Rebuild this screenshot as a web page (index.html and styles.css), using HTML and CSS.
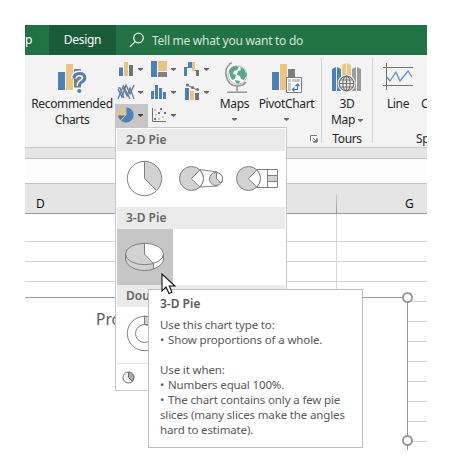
FILE: index.html
```html
<!DOCTYPE html>
<html lang="en">
<head>
<meta charset="utf-8">
<title>Chart design</title>
<link rel="stylesheet" href="styles.css">
</head>
<body>
<main class="window">
  <header class="tabs">
    <span class="tab tab-cut">p</span>
    <span class="tab tab-active">Design</span>
    <span class="tell">
      <svg width="16" height="16" viewBox="0 0 16 16" fill="none" stroke="#e4eee8" stroke-width="1.3"><circle cx="9.5" cy="6" r="4.8"/><path d="M6.2 9.6 1 14.8"/></svg>
      <span class="tell-text">Tell me what you want to do</span>
    </span>
  </header>

  <section class="ribbon">
    <div class="group charts">
      <div class="big recommended">
        <svg width="32" height="34" viewBox="58 62 32 34"><path fill="#4a81ba" d="M60 72h7v18h-7z"/><path fill="#eec57f" d="M68 64h7v26h-7z"/><path fill="#7d7d7d" d="M76 69h7v21h-7z"/><path d="M76 78.500q0-5 5.500-5t5.300 4.300q0 2.700-3 4.200-2.300 1.200-2.300 4" fill="none" stroke="#f3f3f3" stroke-width="6"/><path d="M76 78.500q0-5 5.500-5t5.300 4.300q0 2.700-3 4.200-2.300 1.200-2.300 4" fill="none" stroke="#4a81ba" stroke-width="3"/><path d="M76 87.500h8v6h-8z" fill="#f3f3f3"/><circle cx="81.300" cy="91" r="2" fill="#4a81ba"/></svg>
        <span class="label">Recommended</span><span class="label">Charts</span>
      </div>
      <div class="smalls">
        <svg class="small" viewBox="0 0 33 23"><path fill="#4a81ba" d="M4 9.500h4V18H4z"/><path fill="#eac383" d="M9 4h4v14H9z"/><path fill="#737373" d="M14 7h4v11h-4z"/><path class="arrow" d="M23 10h5v1l-2.500 2-2.500-2z"/></svg>
        <svg class="small" viewBox="0 0 33 23"><path fill="#4a81ba" d="M3 3h6v16H3z"/><path fill="#eac383" d="M10 3h9v10h-9z"/><path fill="#828282" d="M10 14h9v5h-9z"/><path class="arrow" d="M23 10h5v1l-2.500 2-2.500-2z"/></svg>
        <svg class="small" viewBox="0 0 33 23"><path fill="#4a81ba" d="M3 9h4V4h4v6H6v8H3z"/><path fill="#eac383" d="M11 4h3v9h-3z"/><path fill="#737373" d="M14 12h4v6h-3v-5h-1z"/><path class="arrow" d="M23 10h5v1l-2.500 2-2.500-2z"/></svg>
        <svg class="small" viewBox="0 0 33 23" fill="none" stroke-width="1.300"><path stroke="#737373" d="m3 8 4 8 4-12 4 9 4-9M8 4l7 14"/><path stroke="#4a81ba" d="m3 18 5-12 4 9 3-8 4 11M3 7h2l4 10"/><path class="arrow" stroke="none" d="M23 10h5v1l-2.500 2-2.500-2z"/></svg>
        <svg class="small" viewBox="0 0 33 23"><path fill="#4a81ba" d="M3 10h3v8H3zM7 4h3v14H7zM11 7h3v11h-3zM15 11h3v7h-3z"/><path class="arrow" d="M23 10h5v1l-2.500 2-2.500-2z"/></svg>
        <svg class="small" viewBox="0 0 33 23"><path fill="#4a81ba" d="M4 7h4v12H4z"/><path fill="#eac383" d="M9 10h4v9H9z"/><path fill="#737373" d="M14 12h4v7h-4z"/><path d="m6 4 5 2.500L16.500 9" stroke="#737373" fill="none"/><g fill="#737373"><circle cx="6.500" cy="4" r="1.600"/><circle cx="11.500" cy="6.500" r="1.600"/><circle cx="16.500" cy="8.500" r="1.600"/></g><path class="arrow" d="M23 10h5v1l-2.500 2-2.500-2z"/></svg>
        <svg class="small pressed" viewBox="0 0 33 23"><path fill="#4a81ba" d="M11.500 3.500a7.500 7.500 0 1 1-5.500 13l5.500-5.500z"/><path fill="#eac383" d="M10 3.500V10H3q0-6 7-6.500z"/><path fill="#6e6e6e" d="M3 11.500h7L5.200 16Q3.300 14 3 11.500z"/><path fill="#444" d="M23 10h5v1l-2.500 2-2.500-2z"/></svg>
        <svg class="small" viewBox="0 0 33 23"><path d="M4.500 4v13.500H18" fill="none" stroke="#737373"/><path fill="#4a81ba" d="M12 4h2v2h-2zM10 8h2v2h-2zM16 8h2v2h-2zM6 14h2v2H6z"/><path fill="#eac383" d="M6 5h2v2H6zM7 10h2v2H7zM14 12h2v2h-2zM10 14h2v2h-2z"/><path class="arrow" d="M23 10h5v1l-2.500 2-2.500-2z"/></svg>
      </div>
      <div class="big maps">
        <svg width="32" height="34" viewBox="218 62 32 34"><circle cx="236.500" cy="75" r="9.300" fill="#fff" stroke="#c2c2c2"/><path fill="#5ba58a" d="M228 71q2-5 7-5l3 1-2 3-3 1-1 3 3 1-1 4-3 1-2-4zM239 67l4 2 3 6-3 5-3-1-1-3-3-1 1-4 3-1zM234 80l5 1-1 3-3-1z"/><path d="M229 64q-5 4-4 11 2 11 11 11 6 0 9-4M236 86v5M226 92.200h20M228 64l3-1" stroke="#949494" stroke-width="1.600" fill="none"/></svg>
        <span class="label">Maps</span><svg class="down" viewBox="0 0 5 3"><path d="M0 0h5v1L2.500 3 0 1z" fill="#6b6b6b"/></svg>
      </div>
      <div class="big pivot">
        <svg width="32" height="34" viewBox="271 62 32 34"><path fill="#4a81ba" d="M272 72h7v18h-7z"/><path fill="#eec57f" d="M280 64h7v26h-7z"/><path fill="#7d7d7d" d="M288 69h7v8h-7z"/><path fill="#fff" stroke="#7d7d7d" d="M286.500 77.500h15v15h-15z"/><path fill="#c8c8c8" d="M288 79h3v3h-3zM292 79h8v3h-8zM288 83h3v8h-3z"/><path d="M294.500 87.500l-2 2 2 2M293 89.500h4.500V84M295.500 86l2-2 2 2" fill="none" stroke="#3976b5" stroke-width="1.200"/></svg>
        <span class="label">PivotChart</span><svg class="down" viewBox="0 0 5 3"><path d="M0 0h5v1L2.500 3 0 1z" fill="#6b6b6b"/></svg>
      </div>
      <svg class="launcher" viewBox="0 0 8 8" fill="none" stroke="#777"><path d="M.500 6V.500H7M3 3l3 3M7 3v4H3"/><path d="M7 4v3H4z" fill="#777"/></svg>
    </div>
    <div class="group tours">
      <div class="big">
        <svg width="32" height="34" viewBox="331 62 32 34"><path fill="#4a81ba" d="m332 69 4-2v24h-4zM337 67l4 2v22h-4z"/><path fill="#eec57f" d="m342 65 4-2v15h-4zM347 63l4 2v13h-4z"/><path fill="#9b9b9b" d="m352 69 4-2v24h-4zM357 67l4 2v22h-4z"/><circle cx="346.500" cy="83.500" r="9" fill="#f3f3f3"/><g fill="none" stroke="#737373" stroke-width="1.200"><circle cx="346.500" cy="83.500" r="7.300"/><ellipse cx="346.500" cy="83.500" rx="3.700" ry="7.300"/><path d="M339 83.500h15M346.500 76v15M340.500 80h12M340.500 87h12"/></g></svg>
        <span class="label">3D</span><span class="label">Map <svg class="inline-arrow" viewBox="0 0 5 3"><path d="M0 0h5v1L2.500 3 0 1z" fill="#6b6b6b"/></svg></span>
      </div>
      <span class="label group-name">Tours</span>
    </div>
    <div class="group spark">
      <div class="big">
        <svg width="32" height="34" viewBox="382 62 32 34" fill="none"><path d="M386.500 63v27M383 67.500h30M383 85.500h30" stroke="#737373"/><path d="m387 77 3 4 6-9 4 9 8-10 4 6" stroke="#5b91c8" stroke-width="1.300"/></svg>
        <span class="label">Line</span>
      </div>
      <span class="label column">Column</span>
      <span class="label sp">Sparklines</span>
    </div>
  </section>

  <div class="gap"></div>
  <div class="formula"></div>
  <div class="columns"><span class="col-d">D</span><i class="tick"></i><span class="col-g">G</span></div>
  <section class="sheet">
    <div class="chart">
      <h1 class="chart-title">Product</h1>
      <i class="handle top"></i><i class="handle bottom"></i>
    </div>
  </section>

  <section class="menu">
    <h2 class="menu-head">2-D Pie</h2>
    <div class="choices">
      <svg class="choice" viewBox="117 151 56 56"><circle cx="144.500" cy="178.500" r="17.200" fill="#fff"/><path d="M144.500 178.500v-17.200a17.200 17.200 0 0 1 12.200 29.300z" fill="#d2d2d2"/><g fill="none" stroke="#7f7f7f"><circle cx="144.500" cy="178.500" r="17.200"/><path d="M144.500 161.300v17.200l12.200 12.200"/></g></svg>
      <svg class="choice" viewBox="173 151 56 56" stroke="#7f7f7f"><path d="m199.500 169.500 18 2.500m-18 15 18-1" fill="none"/><circle cx="191.500" cy="178.500" r="12" fill="#d2d2d2"/><path d="m199.800 170-8.500 8.700 8.500 8.300q3.700-4 3.700-8.500t-3.700-8.500z" fill="#fff"/><circle cx="216" cy="179" r="6.500" fill="#d2d2d2"/><path d="M216.500 172.500v6l4 4.500q2-2 2-4 0-5.500-6-6.500z" fill="#fff"/></svg>
      <svg class="choice" viewBox="229 151 56 56" stroke="#7f7f7f"><circle cx="248.500" cy="178.500" r="12" fill="#d2d2d2"/><path d="m256.800 170-8.500 8.700 8.500 8.300q3.700-4 3.700-8.500t-3.700-8.500z" fill="#fff"/><path d="M256.500 169.500h21v18h-21M267.500 169.500v18M267.500 181.500h10" fill="none"/><path d="M267.500 175.500h10v6h-10z" fill="#d2d2d2"/></svg>
    </div>
    <h2 class="menu-head">3-D Pie</h2>
    <div class="choices">
      <svg class="choice selected" viewBox="117 229 56 56"><path d="M125.500 254v6c2 7 11 10.500 19 10.500s17-3.500 19-10.500v-6z" fill="#d2d2d2"/><path d="M153.500 263.500v5.300q7-2.500 10-8V254z" fill="#fff"/><ellipse cx="144.500" cy="254" rx="19" ry="10.700" fill="#d2d2d2"/><path d="M144.500 254v-10.700a19 10.700 0 0 1 9 20.200z" fill="#fff"/><g fill="none" stroke="#7f7f7f"><ellipse cx="144.500" cy="254" rx="19" ry="10.700"/><path d="M144.500 243.300V254l9 9.500v5.300M125.500 254v6c2 7 11 10.500 19 10.500s17-3.500 19-10.500v-6"/></g></svg>
    </div>
    <h2 class="menu-head">Doughnut</h2>
    <div class="choices">
      <svg class="choice" viewBox="117 307 56 56" fill="none" stroke="#7f7f7f"><path d="M144.500 316v8.500a9 9 0 0 1 7 14.500l5 6a17 17 0 0 0-12-29z" fill="#d2d2d2"/><circle cx="144.500" cy="333.500" r="17.200"/><circle cx="144.500" cy="333.500" r="9"/></svg>
    </div>
    <div class="more"><svg width="13" height="13" viewBox="0 0 13 13"><path d="M6.500 6.500V1a5.500 5.500 0 0 1 4 9.500z" fill="#ababab"/><g fill="none" stroke="#666"><circle cx="6.500" cy="6.500" r="5.500"/><path d="M6.500 1v5.500l4 4"/></g></svg></div>
  </section>

  <aside class="tip">
    <h3 class="tip-title">3-D Pie</h3>
    <p>Use this chart type to:</p>
    <p><span class="dot">•</span>Show proportions of a whole.</p>
    <p class="blank"></p>
    <p>Use it when:</p>
    <p><span class="dot">•</span>Numbers equal 100%.</p>
    <p><span class="dot">•</span>The chart contains only a few pie</p>
    <p>slices (many slices make the angles</p>
    <p>hard to estimate).</p>
  </aside>
  <svg class="pointer" viewBox="0 0 15 22"><path d="M1 1v17l4-4 3 6.500 3-1.300L8.300 13H14z" fill="#fff" stroke="#111" stroke-width="1.100"/></svg>
</main>
</body>
</html>
```
FILE: styles.css
```css
* { box-sizing: border-box; }
body { margin: 0; background: #fff; font: 12px "Noto Sans", "Open Sans", sans-serif; color: #262626; }
h1, h2, h3, p { margin: 0; }
svg { display: block; flex: none; }
.window { position: relative; width: 402px; height: 425px; margin: 25px 0 0 25px; overflow: hidden; }
.tabs { display: flex; height: 30px; background: #217346; color: #fff; line-height: 29px; letter-spacing: -0.27px; white-space: nowrap; }
.tab-cut { width: 24px; }
.tab-active { width: 67px; background: #1b5c38; text-align: center; }
.tell { display: flex; align-items: center; gap: 7px; padding-left: 13px; color: #d5e5db; }

.ribbon { display: flex; height: 93px; padding: 3px 0 4px; background: #f3f3f3; border-bottom: 1px solid #c9c9c9; overflow: hidden; }
.group { position: relative; display: flex; flex: none; white-space: nowrap; }
.label { line-height: 16px; letter-spacing: -0.35px; }
.big { display: flex; flex-direction: column; align-items: center; padding-top: 4px; }
.charts { width: 297px; border-right: 1px solid #d2d2d2; }
.recommended { width: 90px; padding-left: 4px; }
.smalls { display: grid; grid-template-columns: repeat(3, 33px); grid-auto-rows: 23px; }
.small { width: 33px; height: 23px; }
.pressed { background: #c6c6c6; }
.arrow { fill: #666; }
.down { width: 5px; height: 3px; margin-top: 6px; }
.maps { width: 41px; }
.pivot { width: 63px; }
.launcher { position: absolute; right: 3px; bottom: 0; width: 8px; height: 8px; }
.tours { width: 51px; flex-direction: column; align-items: center; border-right: 1px solid #d2d2d2; }
.tours .big .label:last-child { display: flex; align-items: center; }
.inline-arrow { width: 5px; height: 3px; margin-left: 3px; }
.group-name { margin-top: 3px; }
.spark { width: 54px; }
.spark .big { width: 50px; }
.column { position: absolute; left: 48px; top: 38px; }
.sp { position: absolute; left: 43px; top: 73px; }

.gap { height: 11px; background: #e5e5e5; border-bottom: 1px solid #c3c3c3; }
.formula { height: 25px; background: #fdfdfd; border-bottom: 1px solid #c3c3c3; }
.columns { display: flex; height: 30px; background: #e5e5e5; border-bottom: 1px solid #999; color: #111; line-height: 39px; }
.col-d { width: 311px; padding-left: 11px; }
.tick { width: 1px; height: 19px; margin-top: 10px; background: linear-gradient(#cfcfcf, #999); }
.col-g { padding-left: 68px; }
.sheet { position: relative; height: 236px; background: linear-gradient(#d4d4d4, #d4d4d4) 311px 0 / 1px 100% no-repeat, repeating-linear-gradient(transparent 0 19px, #d4d4d4 19px 20px) 0 8px no-repeat, #fff; }
.chart { position: absolute; left: -1px; top: 83px; width: 384px; height: 170px; background: #fff; border: 1px solid #999; }
.chart-title { padding: 10px 0 0 71px; font-size: 15.5px; font-weight: 400; line-height: 22px; color: #595959; }
.handle { position: absolute; right: -6px; width: 11px; height: 11px; border: 2px solid #999; border-radius: 50%; background: #fff; }
.handle.top { top: -6px; }
.handle.bottom { top: 137px; }

.menu { position: absolute; left: 90px; top: 102px; width: 172px; height: 264px; padding: 1px; background: #fff; border: 1px solid #c6c6c6; }
.menu-head { height: 22px; padding-left: 9px; background: #eaeaea; color: #666; font-size: 12px; line-height: 22px; font-weight: 600; }
.choices { display: flex; height: 56px; }
.choice { width: 56px; height: 56px; }
.selected { background: #c6c6c6; }
.more { height: 27px; padding: 7px 0 0 5px; border-top: 1px solid #e1e1e1; }
.tip { position: absolute; left: 123px; top: 264px; width: 215px; height: 159px; padding: 6px 11px; background: #fff; border: 1px solid #bebebe; color: #595959; font-size: 11.5px; line-height: 15px; letter-spacing: -0.14px; white-space: nowrap; }
.tip-title { margin-bottom: 6px; font-size: 12px; font-weight: 600; line-height: 15px; letter-spacing: 0; }
.dot { display: inline-block; width: 8px; }
.blank { height: 15px; }
.pointer { position: absolute; left: 136px; top: 248px; width: 15px; height: 22px; }
```
